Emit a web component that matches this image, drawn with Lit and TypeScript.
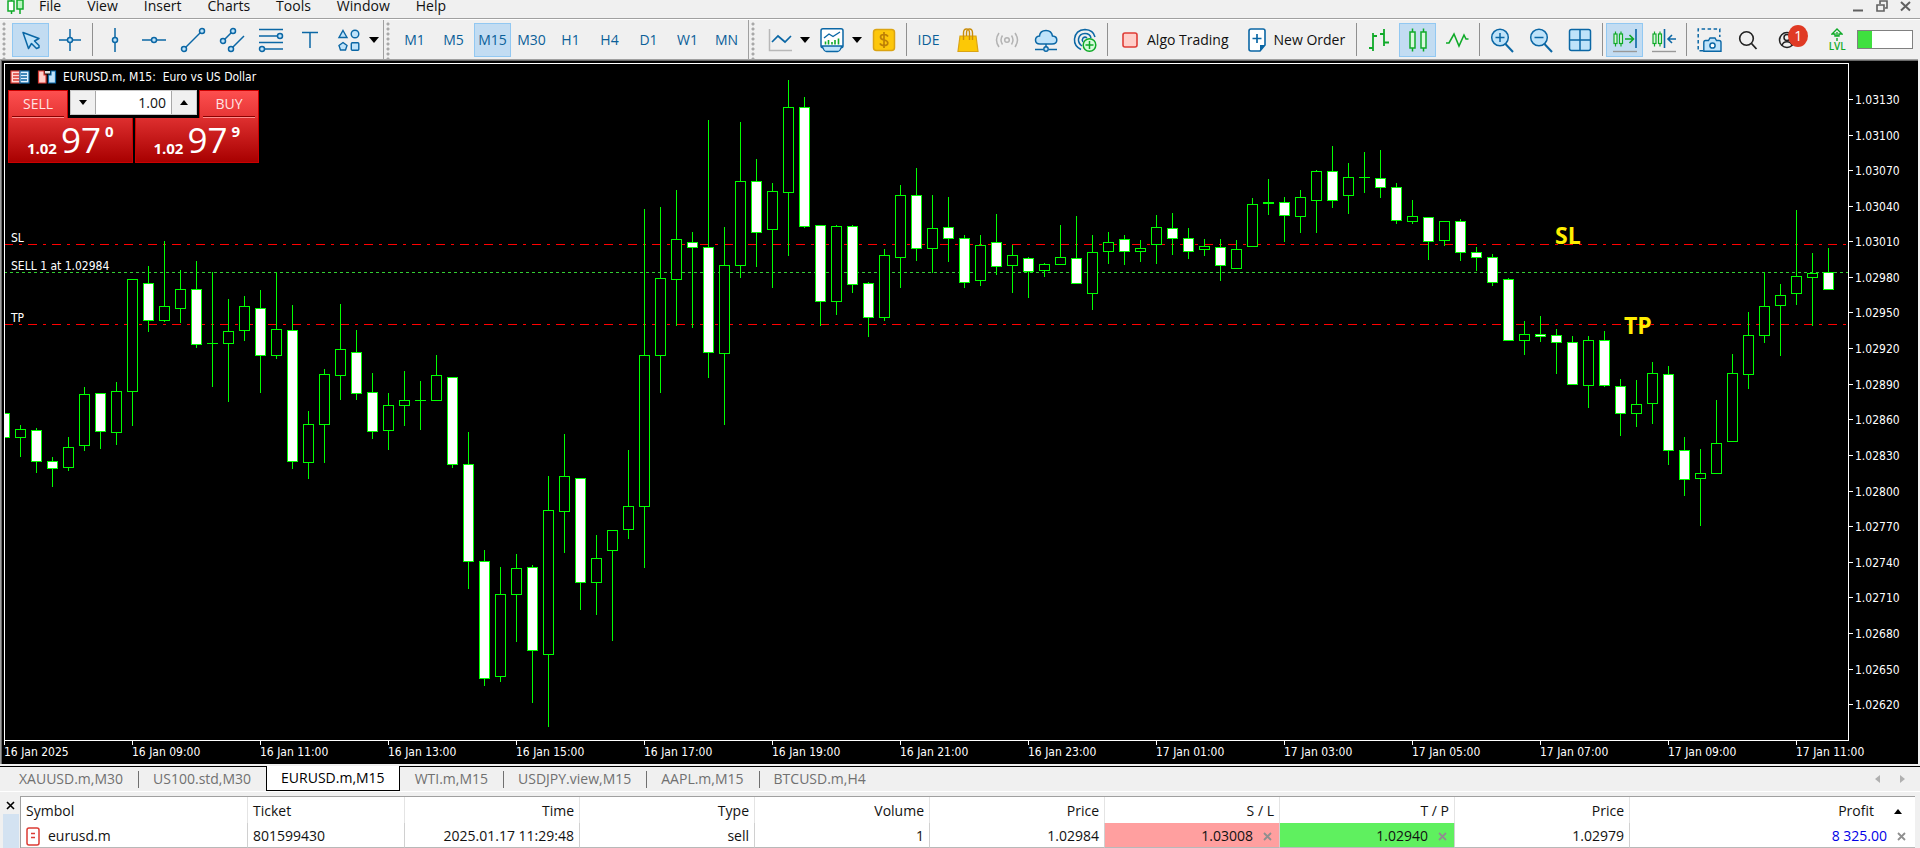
import { LitElement, html, svg, css } from "lit";
import { customElement, property } from "lit/decorators.js";

/* One candle: high, body top, body bottom, low (window rows), 1 when the body is filled. */
type Candle = [number, number, number, number, 0 | 1];

const CANDLES: Candle[] = [
  [413, 413, 438, 438, 1], [425, 429, 438, 457, 0], [428, 430, 462, 473, 1], [457, 461, 469, 487, 1],
  [437, 447, 468, 471, 0], [387, 394, 446, 451, 0], [393, 393, 432, 449, 1], [382, 391, 433, 445, 0],
  [279, 279, 392, 426, 0], [266, 283, 321, 332, 1], [241, 306, 321, 322, 0], [270, 289, 309, 323, 0],
  [261, 289, 345, 348, 1], [272, 343, 344, 387, 0], [299, 331, 344, 402, 0], [296, 306, 331, 341, 0],
  [290, 308, 356, 393, 1], [272, 329, 356, 359, 0], [305, 330, 462, 469, 1], [411, 424, 463, 479, 0],
  [369, 374, 425, 463, 0], [304, 349, 376, 400, 0], [330, 352, 394, 400, 1], [373, 392, 432, 439, 1],
  [393, 405, 431, 450, 0], [371, 400, 406, 426, 0], [381, 400, 401, 430, 0], [355, 375, 401, 401, 0],
  [377, 377, 465, 468, 1], [432, 464, 562, 589, 1], [550, 561, 679, 686, 1], [567, 594, 677, 682, 0],
  [554, 568, 595, 642, 0], [565, 567, 651, 703, 1], [476, 510, 655, 727, 0], [434, 476, 512, 553, 0],
  [478, 478, 583, 610, 1], [535, 558, 583, 615, 0], [530, 530, 551, 641, 0], [450, 506, 530, 539, 0],
  [209, 355, 507, 568, 0], [207, 278, 356, 393, 0], [190, 239, 280, 326, 0], [232, 242, 248, 328, 1],
  [120, 247, 353, 378, 1], [227, 265, 354, 425, 0], [122, 181, 266, 278, 0], [159, 181, 233, 267, 1],
  [183, 191, 230, 288, 0], [80, 107, 193, 256, 0], [97, 107, 227, 228, 1], [225, 225, 302, 326, 1],
  [225, 226, 302, 315, 0], [225, 226, 285, 293, 1], [282, 283, 318, 337, 1], [249, 255, 318, 321, 0],
  [185, 195, 258, 288, 0], [168, 195, 249, 261, 1], [195, 228, 249, 273, 0], [197, 227, 239, 262, 1],
  [235, 238, 283, 288, 1], [235, 245, 281, 286, 0], [214, 242, 267, 275, 1], [245, 255, 266, 293, 0],
  [257, 258, 272, 298, 1], [263, 264, 271, 277, 0], [225, 257, 265, 265, 0], [216, 258, 284, 284, 1],
  [235, 252, 294, 310, 0], [232, 242, 252, 264, 0], [235, 239, 252, 265, 1], [240, 248, 252, 262, 0],
  [215, 227, 245, 264, 0], [213, 228, 239, 255, 1], [228, 238, 252, 259, 1], [239, 246, 250, 256, 0],
  [239, 247, 266, 281, 1], [240, 249, 269, 269, 0], [198, 204, 247, 247, 0], [179, 202, 204, 215, 0],
  [197, 202, 216, 242, 1], [190, 197, 217, 233, 0], [170, 171, 201, 233, 0], [146, 171, 201, 208, 1],
  [163, 177, 196, 214, 0], [152, 177, 178, 193, 0], [150, 178, 188, 198, 1], [183, 187, 221, 224, 1],
  [200, 216, 222, 224, 0], [217, 217, 242, 260, 1], [221, 221, 241, 246, 0], [219, 221, 253, 261, 1],
  [247, 252, 258, 271, 1], [254, 257, 283, 286, 1], [278, 279, 341, 341, 1], [321, 334, 341, 355, 0],
  [316, 334, 337, 342, 1], [329, 335, 343, 374, 1], [336, 342, 385, 385, 1], [336, 340, 386, 408, 0],
  [331, 340, 386, 387, 1], [379, 386, 414, 436, 1], [380, 404, 414, 427, 0], [362, 373, 404, 424, 0],
  [366, 374, 451, 465, 1], [437, 450, 480, 496, 1], [449, 473, 479, 526, 0], [400, 443, 474, 474, 0],
  [354, 373, 442, 442, 0], [312, 335, 375, 389, 0], [272, 306, 336, 343, 0], [284, 295, 306, 356, 0],
  [210, 276, 294, 305, 0], [253, 273, 278, 326, 0], [248, 272, 290, 290, 1],
];

const PRICE_ROWS = [99, 135, 170, 206, 241, 277, 312, 348, 384, 419, 455, 491, 526, 562, 597, 633, 669, 704];

const TIMES = [
  "16 Jan 2025", "16 Jan 09:00", "16 Jan 11:00", "16 Jan 13:00", "16 Jan 15:00", "16 Jan 17:00",
  "16 Jan 19:00", "16 Jan 21:00", "16 Jan 23:00", "17 Jan 01:00", "17 Jan 03:00", "17 Jan 05:00",
  "17 Jan 07:00", "17 Jan 09:00", "17 Jan 11:00",
];

const B = "#0b67a5";
const L = "#bfe3fa";
const G = "#0faa28";

const ICONS: Record<string, unknown> = {
  cursor: svg`<path d="M4 4.500L20 10.500L15.500 13L20 17.500V19.500L17.500 20.500L12.500 15.500L9.500 20.500Z" fill=${L} stroke=${B} stroke-width="1.500" stroke-linejoin="round"/>`,
  cross: svg`<path d="M12 1V9M12 15V23M1 12H9M15 12H23" stroke=${B} stroke-width="1.500"/><circle cx="12" cy="12" r="2.500" fill=${L} stroke=${B} stroke-width="1.500"/>`,
  vline: svg`<path d="M12 0V24" stroke=${B} stroke-width="1.500"/><circle cx="12" cy="12" r="2.500" fill=${L} stroke=${B} stroke-width="1.500"/>`,
  hline: svg`<path d="M0 12H24" stroke=${B} stroke-width="1.500"/><circle cx="12" cy="12" r="2.500" fill=${L} stroke=${B} stroke-width="1.500"/>`,
  trend: svg`<path d="M3 21L21 3" stroke=${B} stroke-width="1.500"/><circle cx="3" cy="21" r="2.500" fill=${L} stroke=${B} stroke-width="1.500"/><circle cx="21" cy="3" r="2.500" fill=${L} stroke=${B} stroke-width="1.500"/>`,
  channel: svg`<path d="M3 13L13 3M11 21L24 8" stroke=${B} stroke-width="1.500"/><circle cx="3" cy="13" r="2.500" fill=${L} stroke=${B} stroke-width="1.500"/><circle cx="13" cy="3" r="2.500" fill=${L} stroke=${B} stroke-width="1.500"/><circle cx="11" cy="21" r="2.500" fill=${L} stroke=${B} stroke-width="1.500"/>`,
  fibo: svg`<path d="M0 1.500H24M0 8H18M0 14.500H24M5 21H24" stroke=${B} stroke-width="1.500"/><circle cx="21" cy="8" r="2.500" fill=${L} stroke=${B} stroke-width="1.500"/><circle cx="3" cy="21" r="2.500" fill=${L} stroke=${B} stroke-width="1.500"/>`,
  text: svg`<path d="M4 4.500H20M12 4.500V20" stroke=${B} stroke-width="1.500"/>`,
  shapes: svg`<g fill=${L} stroke=${B} stroke-width="1.400"><path d="M6 2.500L10 9.500H2Z"/><circle cx="18" cy="6" r="3.800"/><path d="M6 14.500L10 17.500L8.500 22H3.500L2 17.500Z"/><rect x="14.300" y="14.700" width="7.500" height="7.500" rx="1"/></g>`,
  lines: svg`<path d="M1.500 1V22.500H24" fill="none" stroke="#b8b8b8" stroke-width="1.500"/><path d="M4 14L10 8L17 14L23 8" fill="none" stroke=${B} stroke-width="1.700"/>`,
  indicator: svg`<rect x="1" y="0.800" width="22" height="19" rx="2" fill="#fff" stroke=${B} stroke-width="1.500"/><path d="M2 18H22L20 22Q19 23.500 17.500 23.500H6.500Q5 23.500 4 22Z" fill=${L} stroke=${B} stroke-width="1.300"/><path d="M4 10L9 6L13 8.500L20 4" fill="none" stroke=${B} stroke-width="1.400"/><path d="M5.500 16.500V13.500M8.500 16.500V12M12 16.500V14M15 16.500V12M18.500 16.500V10.500" stroke=${G} stroke-width="1.600"/>`,
  dollar: svg`<rect x="1.500" y="1.500" width="21" height="21" rx="3" fill="#fdc70c" stroke="#dba413" stroke-width="1.500"/><path d="M16 8.500Q15 6.500 12 6.500Q8.500 6.500 8.500 9Q8.500 11.300 12 12Q15.800 12.800 15.800 15Q15.800 17.500 12 17.500Q9 17.500 8 15.300M12 4V20" fill="none" stroke="#bd7f06" stroke-width="1.700"/>`,
  bag: svg`<path d="M4 8H20L22 23.500H2Z" fill="#fcc806" stroke="#dba413" stroke-width="1.200"/><path d="M7.500 12V5Q7.500 1 10.500 1Q13.500 1 13.500 5V12M10.500 8V5Q10.500 1 13.500 1Q16.500 1 16.500 5V12" fill="none" stroke="#c98d0a" stroke-width="1.400"/>`,
  signal: svg`<g fill="none" stroke="#b3b3b3" stroke-width="1.500"><circle cx="12" cy="12" r="2.300"/><path d="M7.500 16.500Q4.500 12 7.500 7.500M16.500 16.500Q19.500 12 16.500 7.500M4 19Q-1 12 4 5M20 19Q25 12 20 5"/></g>`,
  cloud: svg`<path d="M6 16Q1.500 16 1.500 12Q1.500 8.500 5.500 8Q6 2.500 12 2.500Q17.500 2.500 18.500 8Q22.800 8.300 22.800 12Q22.800 16 18 16Z" fill=${L} stroke=${B} stroke-width="1.500"/><path d="M12 16V20M1 21.500H9.500M14.500 21.500H23" stroke=${B} stroke-width="1.500"/><circle cx="12" cy="21" r="2.200" fill=${L} stroke=${B} stroke-width="1.400"/>`,
  community: svg`<g fill="none" stroke=${B} stroke-width="1.500"><path d="M8 21.500Q1 18 1.500 11Q2.500 2 12 1.500Q20.500 2 22 9"/><path d="M9 18Q5 15 5.500 11Q6.500 5.500 12 5.500Q17 5.500 18 10"/><path d="M10 14Q8.500 12 10 10Q12 8.200 14 10"/></g><circle cx="16.500" cy="17" r="6.300" fill="#d6fadb" stroke=${G} stroke-width="1.500"/><path d="M16.500 13V21M12.500 17H20.500" stroke=${G} stroke-width="1.500"/>`,
  stop: svg`<rect x="5" y="5" width="14" height="14" rx="2" fill="#ffcfca" stroke="#df3c36" stroke-width="1.600"/>`,
  order: svg`<path d="M6 1H18Q20 1 20 3V17L15 23H6Q4 23 4 21V3Q4 1 6 1Z" fill="#fff" stroke=${B} stroke-width="1.600"/><path d="M20 17H15V23Z" fill=${B}/><path d="M12 6V15M7.500 10.500H16.500" stroke=${B} stroke-width="1.700"/>`,
  bars: svg`<path d="M6 5V23M2 20H6M6 8H10M17 1V18M13 6H17M17 14.500H22" stroke=${G} stroke-width="1.800"/>`,
  candles: svg`<path d="M6.500 0.500V23.500M17.500 0.500V23.500" stroke=${G} stroke-width="1.500"/><rect x="4" y="4" width="5" height="16" fill="#d8f8dc" stroke=${G} stroke-width="1.500"/><rect x="15" y="4" width="5" height="16" fill="#d8f8dc" stroke=${G} stroke-width="1.500"/>`,
  wave: svg`<path d="M1 15H4L9 6L14 18L19 7L21 11H23.500" fill="none" stroke=${G} stroke-width="1.600"/>`,
  zoomin: svg`<path d="M15.500 16L23 24" stroke=${B} stroke-width="2"/><circle cx="10" cy="9.500" r="8.300" fill=${L} stroke=${B} stroke-width="1.500"/><path d="M10 5V14M5.500 9.500H14.500" stroke=${B} stroke-width="1.500"/>`,
  zoomout: svg`<path d="M15.500 16L23 24" stroke=${B} stroke-width="2"/><circle cx="10" cy="9.500" r="8.300" fill=${L} stroke=${B} stroke-width="1.500"/><path d="M5.500 9.500H14.500" stroke=${B} stroke-width="1.500"/>`,
  tile: svg`<rect x="1.500" y="1.500" width="21" height="21" rx="2" fill=${L} stroke=${B} stroke-width="1.500"/><path d="M12 1.500V22.500M1.500 12H22.500" stroke=${B} stroke-width="1.500"/>`,
  scroll: svg`<path d="M2.500 3.500V18.500M8 3.500V18.500" stroke=${G} stroke-width="1.200"/><rect x="1" y="6" width="3" height="9.500" fill="#d8f8dc" stroke=${G} stroke-width="1.200"/><rect x="6.500" y="6" width="3" height="9.500" fill="#d8f8dc" stroke=${G} stroke-width="1.200"/><path d="M12 11H20M16.500 7L20.500 11L16.500 15" fill="none" stroke=${G} stroke-width="1.600"/><path d="M23 1V20" stroke=${B} stroke-width="1.600"/><path d="M0 23.500H24" stroke="#999" stroke-width="1.400"/>`,
  shift: svg`<path d="M2.500 3.500V18.500M8 3.500V18.500" stroke=${G} stroke-width="1.200"/><rect x="1" y="6" width="3" height="9.500" fill="#d8f8dc" stroke=${G} stroke-width="1.200"/><rect x="6.500" y="6" width="3" height="9.500" fill="#d8f8dc" stroke=${G} stroke-width="1.200"/><path d="M16 11H24M20 7L16 11L20 15" fill="none" stroke=${B} stroke-width="1.600"/><path d="M12.500 1V20" stroke=${B} stroke-width="1.600"/><path d="M0 23.500H24" stroke="#999" stroke-width="1.400"/>`,
  camera: svg`<path d="M6 22.800H1.200V1H22.800V9" fill="none" stroke=${B} stroke-width="1.500" stroke-dasharray="3.500 2.500"/><path d="M8.500 12.500H11.500L13 10H18L19.500 12.500H22Q24 12.500 24 14.500V23.200H6.800V14.500Q6.800 12.500 8.500 12.500Z" fill=${L} stroke=${B} stroke-width="1.400"/><circle cx="15.500" cy="17.500" r="2.600" fill="#fff" stroke=${B} stroke-width="1.500"/>`,
  search: svg`<circle cx="10.500" cy="10.500" r="6.800" fill="none" stroke="#222" stroke-width="1.600"/><path d="M15.500 15.500L20.500 21" stroke="#222" stroke-width="1.800"/>`,
  account: svg`<g fill="none" stroke="#222" stroke-width="1.500"><circle cx="12" cy="12" r="7.500"/><circle cx="12" cy="9.500" r="3"/><path d="M7 17.500Q8 13.800 12 13.800Q16 13.800 17 17.500"/></g>`,
};

const icon = (name: string) => html`<svg class="icon" viewBox="0 0 24 24" aria-hidden="true">${ICONS[name]}</svg>`;
const tool = (name: string, label: string, on = false) =>
  html`<button class="tool ${on ? "on" : ""}" aria-label=${label} aria-pressed=${on}>${icon(name)}</button>`;
const more = (label: string) => html`<button class="more" aria-label=${label}><span class="tri down"></span></button>`;
const sep = html`<span class="sep"></span>`;

@customElement("terminal-toolbar")
class TerminalToolbar extends LitElement {
  static styles = css`
    :host { display: flex; height: 39px; border-top: 1px solid #fff; background: #f0f0f0; font: 14px/20px "Open Sans", "Noto Sans", sans-serif; color: #111; }
    .group { display: flex; align-items: center; gap: 2px; padding-right: 3px; border-right: 1px solid #a0a0a0; }
    .group.last { flex: 1; border-right: 0; }
    .grip { align-self: stretch; width: 4px; margin: 2px 4px 0 2px; background: radial-gradient(circle at 2px 2px, #a8a8a8 1px, transparent 2px) 0 0 / 4px 5px; }
    button { border: 1px solid transparent; background: none; padding: 0; margin: 0; font: inherit; color: inherit; }
    .tool { box-sizing: border-box; width: 37px; height: 34px; display: flex; align-items: center; justify-content: center; position: relative; }
    .tool.on { background: #c2dcf2; border-color: #92c8f2; }
    .icon { width: 24px; height: 24px; display: block; overflow: visible; }
    .period { color: #0b5f99; }
    .labelled { height: 34px; display: flex; align-items: center; gap: 5px; padding: 0 6px; white-space: nowrap; }
    .more { width: 13px; height: 34px; margin-left: -2px; display: flex; align-items: center; justify-content: center; }
    .tri.down { border: 5px solid transparent; border-top: 6px solid #000; border-bottom: 0; }
    .sep { width: 1px; height: 33px; background: #909090; margin: 0 1px 0 2px; }
    .badge { position: absolute; right: -4px; top: 1px; width: 20px; height: 22px; border-radius: 50%; background: #e03a24; color: #fff; line-height: 22px; text-align: center; }
    .status { display: flex; align-items: center; gap: 12px; margin-left: 22px; }
    .level { width: 16px; color: #0faa28; font-size: 10px; line-height: 11px; font-weight: 600; display: flex; flex-direction: column; align-items: center; }
    .level svg { width: 12px; height: 13px; }
    .meter { box-sizing: border-box; width: 56px; height: 19px; border: 1px solid #808080; background: #fff; }
    .fill { display: block; width: 25%; height: 100%; background: #3fe03f; }
  `;

  render() {
    return html`
      <div class="group">
        <span class="grip"></span>
        ${tool("cursor", "Cursor", true)}${tool("cross", "Crosshair")}${sep}
        ${tool("vline", "Vertical line")}${tool("hline", "Horizontal line")}${tool("trend", "Trendline")}
        ${tool("channel", "Channel")}${tool("fibo", "Fibonacci")}${tool("text", "Text")}${tool("shapes", "Shapes")}${more("More shapes")}
      </div>
      <div class="group">
        <span class="grip"></span>
        ${["M1", "M5", "M15", "M30", "H1", "H4", "D1", "W1", "MN"].map(
          (p) => html`<button class="tool period ${p === "M15" ? "on" : ""}">${p}</button>`
        )}
      </div>
      <div class="group last">
        <span class="grip"></span>
        ${tool("lines", "Chart type")}${more("Chart types")}${tool("indicator", "Indicators")}${more("Indicator list")}
        ${tool("dollar", "Trade levels")}${sep}
        <button class="tool period">IDE</button>
        ${tool("bag", "Market")}${tool("signal", "Signals")}${tool("cloud", "Virtual hosting")}${tool("community", "Community")}${sep}
        <button class="labelled">${icon("stop")}Algo Trading</button>
        <button class="labelled">${icon("order")}New Order</button>
        ${sep}${tool("bars", "Bar chart")}${tool("candles", "Candlesticks", true)}${tool("wave", "Line chart")}${sep}
        ${tool("zoomin", "Zoom in")}${tool("zoomout", "Zoom out")}${tool("tile", "Tile windows")}${sep}
        ${tool("scroll", "Auto scroll", true)}${tool("shift", "Chart shift")}${sep}
        ${tool("camera", "Screenshot")}${tool("search", "Search")}
        <button class="tool" aria-label="Account">${icon("account")}<span class="badge">1</span></button>
        <div class="status">
          <div class="level">
            <svg viewBox="0 0 12 13"><path d="M6 1L11 6H8V8H4V6H1ZM6 10V13M6 4V8" fill="none" stroke=${G} stroke-width="1.400"/></svg>
            LVL
          </div>
          <div class="meter"><span class="fill"></span></div>
        </div>
      </div>
    `;
  }
}

@customElement("one-click-panel")
class OneClickPanel extends LitElement {
  static styles = css`
    :host { display: block; position: relative; width: 251px; font: 14px/20px "Open Sans", "Noto Sans", sans-serif; }
    .sides { display: grid; grid-template-columns: 1fr 1fr; gap: 2px; }
    .side { display: flex; flex-direction: column; border: 0; padding: 0; background: none; color: #fff; font: inherit; }
    .side.buy { align-items: flex-end; }
    .tab { box-sizing: border-box; width: 60px; height: 28px; padding-top: 3px; border: 1px solid #c00; border-bottom: 0; background: linear-gradient(#fd4f4f, #e53434); color: #ffe3e3; position: relative; }
    .tab::after { content: ""; position: absolute; left: 3px; right: 3px; bottom: 0; height: 1px; background: #ff8d8d; border-top: 1px solid #8b0000; }
    .quote { box-sizing: border-box; width: 100%; height: 45px; border: 1px solid #c00; border-top: 0; background: linear-gradient(#de2f2f, #a80000); display: flex; justify-content: center; padding-top: 3px; gap: 4px; }
    .lead { font-size: 15px; font-weight: 700; line-height: 20px; padding-top: 17px; }
    .big { font-size: 35px; line-height: 38px; }
    .pip { font-size: 15px; font-weight: 700; line-height: 20px; }
    .volume { position: absolute; left: 62px; top: 0; width: 127px; height: 25px; display: flex; background: #f0f0f0; box-sizing: border-box; border: 1px solid #c8c8c8; }
    .volume button { width: 24px; border: 0; padding: 0; background: #f0f0f0; display: flex; align-items: center; justify-content: center; }
    .volume input { flex: 1; min-width: 0; border: 0; border-left: 1px solid #a8a8a8; border-right: 1px solid #a8a8a8; margin: 0; padding: 0 5px; text-align: right; font: inherit; color: #111; background: #fff; }
    .down { border: 4px solid transparent; border-top: 5px solid #000; border-bottom: 0; }
    .up { border: 4px solid transparent; border-bottom: 5px solid #000; border-top: 0; }
  `;

  render() {
    return html`
      <div class="sides">
        <button class="side">
          <span class="tab">SELL</span>
          <span class="quote"><span class="lead">1.02</span><span class="big">97</span><span class="pip">0</span></span>
        </button>
        <button class="side buy">
          <span class="tab">BUY</span>
          <span class="quote"><span class="lead">1.02</span><span class="big">97</span><span class="pip">9</span></span>
        </button>
      </div>
      <div class="volume">
        <button aria-label="Decrease volume"><span class="down"></span></button>
        <input aria-label="Volume" value="1.00" />
        <button aria-label="Increase volume"><span class="up"></span></button>
      </div>
    `;
  }
}

@customElement("price-chart")
class PriceChart extends LitElement {
  @property({ attribute: false }) candles: Candle[] = CANDLES;

  static styles = css`
    :host { display: grid; grid-template-columns: 1fr 69px; grid-template-rows: 1fr 23px; background: #000; color: #fff;
      border: solid #a0a0a0; border-width: 1px 0 0 1px; box-shadow: inset 1px 1px #696969; padding: 3px 0 0 3px; margin-right: 2px; position: relative;
      font: 12px/14px "DejaVu Sans Condensed", "Noto Sans", sans-serif; overflow: hidden; }
    .plot { border: 1px solid #fff; min-width: 0; }
    svg { display: block; width: 100%; height: 100%; }
    .crisp { shape-rendering: crispEdges; }
    text { fill: #fff; }
    .mark { fill: #ffee00; font: 700 23px "Open Sans", "Noto Sans", sans-serif; }
    .times { grid-column: 1 / 3; }
    .overlay { position: absolute; left: 7px; top: 9px; display: flex; flex-direction: column; gap: 5px; }
    .caption { display: flex; align-items: center; height: 16px; padding-left: 2px; white-space: pre; }
    .caption svg { width: 20px; height: 14px; }
    .caption .second { margin: 0 6px 0 7px; }
  `;

  render() {
    return html`
      <div class="plot">
        <svg>
          <g class="crisp" transform="translate(-5 -64)">
            <path d="M4 244.500H1846M4 324.500H1846" stroke="#f00" stroke-dasharray="9 6 3 6" />
            <path d="M4 272.500H1848" stroke="#32cd32" stroke-dasharray="3 3" />
            ${this.candles.map(([high, top, bottom, low, filled], i) => {
              const x = 4 + i * 16;
              return svg`<rect x=${x} y=${high} width="1" height=${low - high} fill="#0f0" />
                <rect x=${x - 5} y=${top} width="11" height=${bottom - top} fill="#0f0" />
                ${bottom - top > 2
                  ? svg`<rect x=${x - 4} y=${top + 1} width="9" height=${bottom - top - 2} fill=${filled ? "#fff" : "#000"} />`
                  : null}`;
            })}
          </g>
          <g transform="translate(-5 -64)">
            <text x="11" y="242">SL</text>
            <text x="11" y="270">SELL 1 at 1.02984</text>
            <text x="11" y="322">TP</text>
            <text class="mark" x="1555" y="244">SL</text>
            <text class="mark" x="1624" y="334">TP</text>
          </g>
        </svg>
      </div>
      <svg>
        <g transform="translate(0 -63)">
          ${PRICE_ROWS.map(
            (y, i) => svg`<rect class="crisp" x="0" y=${y} width="4" height="1" fill="#fff" />
              <text x="6" y=${y + 5}>${(1.0313 - i * 0.0003).toFixed(5)}</text>`
          )}
        </g>
      </svg>
      <svg class="times">
        ${TIMES.map(
          (t, i) => svg`<rect class="crisp" x=${i * 128} y="0" width="1" height="4" fill="#fff" />
            <text x=${i * 128} y="15">${t}</text>`
        )}
      </svg>
      <div class="overlay">
        <div class="caption">
          <svg viewBox="0 0 20 14"><rect x="1" y="1" width="9" height="12" fill="#ffdad6" stroke="#dc3b34" stroke-width="1.200"/><rect x="10" y="1" width="9" height="12" fill="#e0f2ff" stroke=${B} stroke-width="1.200"/><path d="M3 4H9M3 7H9M3 10H9" stroke="#dc3b34" stroke-width="1.300"/><path d="M11 4H17M11 7H17M11 10H17" stroke=${B} stroke-width="1.300"/></svg>
          <svg class="second" viewBox="0 0 20 14"><path d="M1.500 1H7V5H9V13H1.500Z" fill="#ffcdc8" stroke="#dc3b34" stroke-width="1.200"/><path d="M18.500 1H14V5H11.500V13H18.500Z" fill="#bfe3fa" stroke=${B} stroke-width="1.200"/><path d="M8 1H13V3.500H8Z" fill="#ddd"/></svg>
          <span>EURUSD.m, M15:  Euro vs US Dollar</span>
        </div>
        <one-click-panel></one-click-panel>
      </div>
    `;
  }
}

@customElement("trade-table")
class TradeTable extends LitElement {
  static styles = css`
    :host { display: flex; background: #f0f0f0; font: 14px/20px "Open Sans", "Noto Sans", sans-serif; color: #111; }
    .side { width: 20px; display: flex; flex-direction: column; align-items: stretch; }
    .close { border: 0; background: none; padding: 0; height: 18px; display: flex; align-items: center; justify-content: center; }
    .strip { flex: 1; margin: 0 1px 0 3px; background: #d3e2f1; }
    table { flex: 1; table-layout: fixed; border-collapse: separate; border-spacing: 0; background: #fff; border-left: 1px solid #a0a0a0; border-top: 1px solid #a0a0a0; margin-right: 5px; width: 100%; }
    th, td { font-weight: 400; text-align: right; padding: 2px 5px 0; border-right: 1px solid #e4e4e4; white-space: nowrap; box-sizing: border-box; }
    th { height: 26px; }
    td { height: 25px; border-right-color: #d0d0d0; border-bottom: 1px solid #b8b8b8; }
    .left { text-align: left; }
    th:last-child, td:last-child { border-right: 0; }
    .w1 { width: 227px; } .w2 { width: 157px; } .w3 { width: 175px; }
    .row { display: flex; align-items: center; justify-content: flex-end; }
    .row.start { justify-content: flex-start; gap: 8px; }
    .row.profit { gap: 20px; padding-right: 8px; }
    .row.amount { gap: 10px; padding-right: 4px; color: #0000e6; }
    .row.level { gap: 10px; padding-right: 2px; }
    .sl { background: #ff9f9f; }
    .tp { background: #5ff05f; }
    .x { border: 0; background: none; padding: 0; display: block; line-height: 0; }
    .up { border: 4px solid transparent; border-bottom: 5px solid #000; border-top: 0; }
  `;

  render() {
    const cross = (label: string) => html`<button class="x" aria-label=${label}>
      <svg width="9" height="9" viewBox="0 0 9 9"><path d="M1 1L8 8M8 1L1 8" stroke="#8f8f8f" stroke-width="1.800"/></svg>
    </button>`;
    return html`
      <div class="side">
        <button class="close" aria-label="Close panel">
          <svg width="9" height="9" viewBox="0 0 9 9"><path d="M1 1L8 8M8 1L1 8" stroke="#000" stroke-width="1.600"/></svg>
        </button>
        <div class="strip"></div>
      </div>
      <table>
        <colgroup>
          <col class="w1" /><col class="w2" /><col class="w3" /><col class="w3" /><col class="w3" /><col class="w3" />
          <col class="w3" /><col class="w3" /><col class="w3" /><col />
        </colgroup>
        <thead>
          <tr>
            <th class="left">Symbol</th><th class="left">Ticket</th><th>Time</th><th>Type</th><th>Volume</th>
            <th>Price</th><th>S / L</th><th>T / P</th><th>Price</th>
            <th><span class="row profit">Profit<span class="up"></span></span></th>
          </tr>
        </thead>
        <tbody>
          <tr>
            <td class="left">
              <span class="row start">
                <svg width="14" height="19" viewBox="0 0 14 19"><rect x="1" y="1" width="12" height="17" rx="2" fill="#fff" stroke="#dc3b34" stroke-width="1.500"/><path d="M5 6.500H9M5 10.500H9" stroke="#dc3b34" stroke-width="1.500"/></svg>
                eurusd.m
              </span>
            </td>
            <td class="left">801599430</td><td>2025.01.17 11:29:48</td><td>sell</td><td>1</td><td>1.02984</td>
            <td class="sl"><span class="row level">1.03008${cross("Remove stop loss")}</span></td>
            <td class="tp"><span class="row level">1.02940${cross("Remove take profit")}</span></td>
            <td>1.02979</td>
            <td><span class="row amount">8 325.00${cross("Close position")}</span></td>
          </tr>
        </tbody>
      </table>
    `;
  }
}

@customElement("app-root")
class AppRoot extends LitElement {
  static styles = css`
    :host { display: flex; flex-direction: column; height: 100vh; overflow: hidden; background: #f0f0f0; font: 14px/20px "Open Sans", "Noto Sans", sans-serif; color: #111; }
    .menu { flex: none; height: 18px; display: flex; align-items: flex-start; padding: 0 3px 0 7px; border-bottom: 1px solid #a0a0a0; }
    .menu button { border: 0; background: none; margin: 0; padding: 0 13px; font: inherit; line-height: 12px; height: 12px; color: inherit; }
    .logo { width: 18px; height: 14px; margin-right: 1px; }
    .controls { margin-left: auto; display: flex; }
    .controls button { padding: 0 6px; display: flex; align-items: center; line-height: 0; }
    price-chart { flex: 1; min-height: 0; }
    .tabs { flex: none; display: flex; height: 24px; margin-top: 2px; padding-left: 4px; border-top: 1px solid #000; color: #707070; }
    .tab { border: 0; background: none; margin: 0; padding: 0 15px; font: inherit; color: inherit; position: relative; display: flex; align-items: center; }
    .tab + .tab:not(.active)::before { content: ""; position: absolute; left: 0; top: 4px; height: 17px; width: 1px; background: #707070; }
    .tab.active + .tab::before { display: none; }
    .tab.active { margin-top: -1px; background: #fff; color: #000; border: 1px solid #000; border-top: 0; padding: 0 14px; }
    .scroll { margin-left: auto; display: flex; align-items: center; gap: 20px; padding-right: 15px; }
    .scroll button { border: 0; background: none; padding: 0; display: block; line-height: 0; }
    trade-table { flex: none; border-top: 1px solid #fff; padding-top: 4px; }
  `;

  render() {
    const tabs = ["XAUUSD.m,M30", "US100.std,M30", "EURUSD.m,M15", "WTI.m,M15", "USDJPY.view,M15", "AAPL.m,M15", "BTCUSD.m,H4"];
    return html`
      <nav class="menu">
        <svg class="logo" viewBox="0 0 18 14"><path d="M4.500 0V14M13 0V17" stroke=${G} stroke-width="1.500"/><rect x="1" y="1" width="6" height="10" fill="#fff" stroke=${G} stroke-width="1.500"/><rect x="10" y="0" width="6" height="9" fill="#b9f5c0" stroke=${G} stroke-width="1.500"/></svg>
        ${["File", "View", "Insert", "Charts", "Tools", "Window", "Help"].map((m) => html`<button>${m}</button>`)}
        <div class="controls">
          <button aria-label="Minimize"><svg width="11" height="12"><path d="M0 10.500H10" stroke="#606060" stroke-width="2"/></svg></button>
          <button aria-label="Restore"><svg width="12" height="12"><path d="M1 5H8V11H1ZM4 4V1H11V8H9" fill="none" stroke="#606060" stroke-width="1.600"/></svg></button>
          <button aria-label="Close"><svg width="11" height="12"><path d="M1 2L10 10.500M10 2L1 10.500" stroke="#606060" stroke-width="2"/></svg></button>
        </div>
      </nav>
      <terminal-toolbar></terminal-toolbar>
      <price-chart></price-chart>
      <div class="tabs">
        ${tabs.map((t) => html`<button class="tab ${t === "EURUSD.m,M15" ? "active" : ""}">${t}</button>`)}
        <div class="scroll">
          <button aria-label="Scroll left"><svg width="5" height="8"><path d="M5 0V8L0 4Z" fill="#b0b0b0"/></svg></button>
          <button aria-label="Scroll right"><svg width="5" height="8"><path d="M0 0V8L5 4Z" fill="#b0b0b0"/></svg></button>
        </div>
      </div>
      <trade-table></trade-table>
    `;
  }
}
